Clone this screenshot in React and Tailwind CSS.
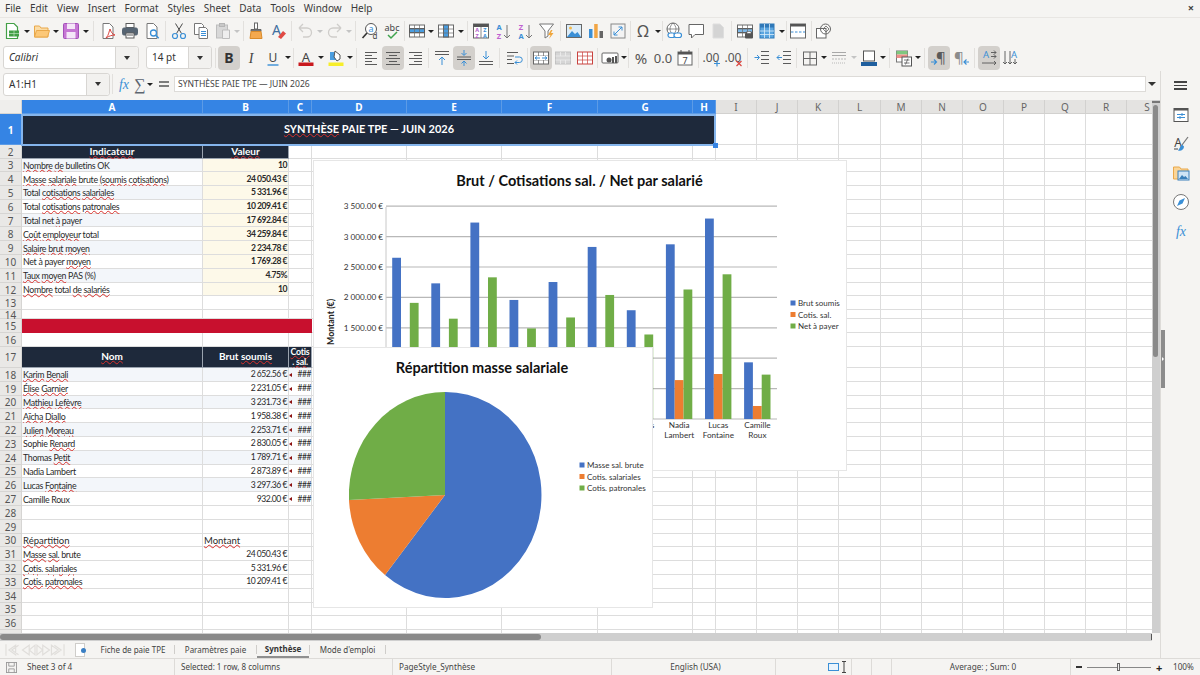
import { Fragment } from 'react';

const GRAY = '#5a5a5a';
const BLUE = '#3a8fd6';
const VALUE_SIZE = 'text-[8.6px] tracking-[-0.5px]';

const cols = [
  ['A', 'w-[181px]'], ['B', 'w-[86px]'], ['C', 'w-[23px]'], ['D', 'w-[95px]'], ['E', 'w-[95px]'],
  ['F', 'w-[96px]'], ['G', 'w-[95px]'], ['H', 'w-[23px]'], ['I', 'w-[41px]'], ['J', 'w-[41px]'],
  ['K', 'w-[41px]'], ['L', 'w-[42px]'], ['M', 'w-[41px]'], ['N', 'w-[41px]'], ['O', 'w-[41px]'],
  ['P', 'w-[41px]'], ['Q', 'w-[41px]'], ['R', 'w-[41px]'], ['S', 'w-[41px]'],
];

const indicateurs = [
  ['[Nombre] [de] bulletins OK', '10'],
  ['[Masse] [salariale] brute [(soumis] [cotisations)]', '24\u00a0050.43\u00a0€'],
  ['Total [cotisations] [salariales]', '5\u00a0331.96\u00a0€'],
  ['Total [cotisations] [patronales]', '10\u00a0209.41\u00a0€'],
  ['Total net [à] payer', '17\u00a0692.84\u00a0€'],
  ['[Coût] [employeur] total', '34\u00a0259.84\u00a0€'],
  ['[Salaire] [brut] [moyen]', '2\u00a0234.78\u00a0€'],
  ['Net à payer [moyen]', '1\u00a0769.28\u00a0€'],
  ['[Taux] [moyen] PAS (%)', '4.75%'],
  ['[Nombre] total [de] [salariés]', '10'],
];

const salaries = [
  ['[Karim] [Benali]', '2\u00a0652.56\u00a0€'],
  ['[Élise] [Garnier]', '2\u00a0231.05\u00a0€'],
  ['[Mathieu] [Lefèvre]', '3\u00a0231.73\u00a0€'],
  ['[Aïcha] [Diallo]', '1\u00a0958.38\u00a0€'],
  ['[Julien] [Moreau]', '2\u00a0253.71\u00a0€'],
  ['Sophie [Renard]', '2\u00a0830.05\u00a0€'],
  ['Thomas [Petit]', '1\u00a0789.71\u00a0€'],
  ['Nadia Lambert', '2\u00a0873.89\u00a0€'],
  ['Lucas [Fontaine]', '3\u00a0297.36\u00a0€'],
  ['Camille Roux', '932.00\u00a0€'],
];

const repartition = [
  ['[Masse] [sal.] brute', '24\u00a0050.43\u00a0€'],
  ['[Cotis.] [salariales]', '5\u00a0331.96\u00a0€'],
  ['[Cotis.] [patronales]', '10\u00a0209.41\u00a0€'],
];

const bars = [
  ['Karim', 'Benali', 2652, 540, 1910],
  ['Élise', 'Garnier', 2231, 450, 1650],
  ['Mathieu', 'Lefèvre', 3231, 660, 2330],
  ['Aïcha', 'Diallo', 1958, 390, 1490],
  ['Julien', 'Moreau', 2253, 460, 1670],
  ['Sophie', 'Renard', 2830, 580, 2040],
  ['Thomas', 'Petit', 1789, 360, 1390],
  ['Nadia', 'Lambert', 2873, 640, 2130],
  ['Lucas', 'Fontaine', 3297, 740, 2380],
  ['Camille', 'Roux', 932, 214, 730],
];

const axis = ['0.00 €', '500.00 €', '1 000.00 €', '1 500.00 €', '2 000.00 €', '2 500.00 €', '3 000.00 €', '3 500.00 €'];

// text with [words] flagged by the spell checker
const Spell = ({ text }) =>
  text.split(/(\[[^\]]+\])/).filter(Boolean).map((part, i) =>
    part.startsWith('[') ? (
      <span key={i} className="underline decoration-wavy decoration-[#d9302c] decoration-1 underline-offset-0">
        {part.slice(1, -1)}
      </span>
    ) : (
      <Fragment key={i}>{part}</Fragment>
    )
  );

const Ico = ({ children, vb = '0 0 18 18' }) => (
  <svg viewBox={vb} className="w-[18px] h-[18px] overflow-visible" fill="none" stroke={GRAY} strokeWidth="1">{children}</svg>
);

const Btn = ({ active, children }) => (
  <div className={`w-[22px] h-[24px] shrink-0 flex items-center justify-center rounded-[4px] ${active ? 'bg-[#d3d0cc]' : ''}`}>
    {children}
  </div>
);

const Drop = ({ off }) => (
  <div className="w-[7.5px] shrink-0 flex justify-center">
    <div className={`w-0 h-0 border-x-[3px] border-x-transparent border-t-[3px] ${off ? 'border-t-[#c4c4c4]' : 'border-t-[#222]'}`} />
  </div>
);

const Sep = ({ w }) => (
  <div className={`${w} shrink-0 flex justify-center`}>
    <div className="w-px h-[20px] bg-[#e2e0dd]" />
  </div>
);

const T = ({ x = 9, y = 14, size = 14, fill = '#444', weight, italic, family, children }) => (
  <text x={x} y={y} fontSize={size} fill={fill} stroke="none" textAnchor="middle" fontWeight={weight}
    fontStyle={italic ? 'italic' : undefined} fontFamily={family}>
    {children}
  </text>
);

const Page = ({ stroke = '#777' }) => <path d="M4 1.5h6.5l3.5 3.5v11.5H4z" fill="#fff" stroke={stroke} />;
const Lines = ({ x1 = 3, x2 = 15, ys, stroke = GRAY }) => ys.map(y => <path key={y} d={`M${x1} ${y}H${x2}`} stroke={stroke} />);

const Table = ({ row, col, stroke = '#6a6a6a', fill = '#4a9de0' }) => (
  <>
    <rect x="1.5" y="3" width="15" height="12" fill="#fff" stroke={stroke} />
    {row && <rect x="1.5" y="6.5" width="15" height="4" fill={fill} />}
    {col && <rect x="6.5" y="3" width="5" height="12" fill={fill} />}
    <path d="M1.5 7h15M1.5 11h15M6.5 3v12M11.5 3v12" stroke={stroke} strokeWidth=".7" />
  </>
);

const icons = {
  newdoc: <Ico><path d="M3.5 1.5h7.5l3.5 3.5v11.5h-11z" fill="#fff" stroke="#43a047" strokeWidth="1.2" /><rect x="6" y="8.5" width="10" height="6" fill="#43a047" stroke="none" /><path d="M6 11.5h10M11 8.5v6" stroke="#cdeccf" strokeWidth=".6" /></Ico>,
  open: <Ico><path d="M1.5 15V4h5l1.5 2h7v9z" fill="#fbdca6" stroke="#e9a84a" /><path d="M1.5 15l2-6.5h13l-2 6.5z" fill="#fcc878" stroke="#e9a84a" /></Ico>,
  save: <Ico><rect x="1.5" y="1.5" width="15" height="15" rx="1" fill="#c676d4" stroke="#a34fb8" /><rect x="5" y="1.5" width="8" height="5.5" fill="#f5e6f8" stroke="none" /><rect x="4.5" y="10" width="9" height="6.5" fill="#f5e6f8" stroke="none" /></Ico>,
  pdf: <Ico><Page /><path d="M7 16c3-3 3-7 4-9 1 3 2 5 5 6-3 0-6 1-9 3z" fill="none" stroke="#d9453f" /></Ico>,
  print: <Ico><rect x="5" y="1.5" width="8" height="4" fill="#fff" /><rect x="1.5" y="6" width="15" height="7" rx="1.5" fill="#566472" stroke="#566472" /><rect x="5" y="11" width="8" height="5" fill="#fff" /><path d="M6 13h6" /></Ico>,
  preview: <Ico><Page /><circle cx="10.5" cy="11" r="3" fill="#fff" stroke={BLUE} strokeWidth="1.3" /><path d="M12.7 13.2l3 3" stroke={BLUE} strokeWidth="1.5" /></Ico>,
  cut: <Ico><path d="M6.5 11.5L12.5 1.5M11.5 11.5L5.5 1.5" stroke="#4b4b4b" /><circle cx="5" cy="14" r="2.5" stroke={BLUE} strokeWidth="1.2" /><circle cx="13" cy="14" r="2.5" stroke={BLUE} strokeWidth="1.2" /></Ico>,
  copy: <Ico><path d="M2.5 1.5h7l2 2v9h-9z" fill="#fff" stroke="#777" /><path d="M7 5.5h6.5l2 2v9H7z" fill="#fff" stroke="#777" /><path d="M9 9.5h5M9 11.5h5M9 13.5h5" stroke={BLUE} /></Ico>,
  paste: <Ico><rect x="2.5" y="3" width="11" height="13" fill="#d8d8d8" stroke="#bdbdbd" /><rect x="5.5" y="1.5" width="5" height="3" fill="#c8c8c8" stroke="#b5b5b5" /><path d="M8.5 8h7v8.5h-7z" fill="#eee" stroke="#bdbdbd" /></Ico>,
  clone: <Ico><rect x="7.5" y="1" width="3" height="6" fill="#fff" stroke="#666" /><path d="M4 7.5h10v2H4z" fill="#777" stroke="#666" /><path d="M4 9.5h10l1 7H3z" fill="#f4a94f" stroke="#d98b2b" /></Ico>,
  clear: <Ico><T x={7.5} y={13} size={14} fill="#3f6f9f">A</T><path d="M9 15l5-6 3 2.5-5 5.5z" fill="#e04a44" stroke="none" /></Ico>,
  undo: <Ico><path d="M3 6h8a4.5 4.5 0 010 9H7M3 6l4-4M3 6l4 4" stroke="#cfcdca" strokeWidth="1.3" /></Ico>,
  redo: <Ico><path d="M15 6H7a4.5 4.5 0 000 9h4M15 6l-4-4M15 6l-4 4" stroke="#cfcdca" strokeWidth="1.3" /></Ico>,
  find: <Ico><circle cx="10" cy="7" r="5.5" fill="#fff" stroke="#555" /><path d="M6 11l-4.5 5" stroke="#333" strokeWidth="1.6" /><T x={10} y={10} size={9} fill={BLUE}>a</T><T x={14} y={17} size={8} fill="#444">d</T></Ico>,
  spell: <Ico><T x={9} y={9} size={9} fill="#444" family="Noto Sans">abc</T><path d="M5 13l3 3 6-6" stroke="#3fa34d" strokeWidth="1.5" /></Ico>,
  rows: <Ico><Table row /></Ico>,
  cols: <Ico><Table col /></Ico>,
  sortaz: <Ico><rect x="1.5" y="2" width="15" height="14" fill="#fff" stroke="#666" /><rect x="1.5" y="2" width="15" height="3" fill="#555" stroke="none" /><path d="M9 5v11" stroke="#888" /><T x={5.2} y={10} size={5.5} fill="#b25ec9" weight="700">A</T><T x={5.2} y={15.5} size={5.5} fill="#b25ec9" weight="700">Z</T><T x={12.8} y={10} size={5.5} fill="#3a8fd6" weight="700">Z</T><T x={12.8} y={15.5} size={5.5} fill="#3a8fd6" weight="700">A</T></Ico>,
  asc: <Ico><T x={5} y={7.5} size={7.5} fill="#3a8fd6" weight="700">A</T><T x={5} y={16.5} size={7.5} fill="#c05fd0" weight="700">Z</T><path d="M13 3v13M10 13l3 3 3-3" stroke="#777" /></Ico>,
  desc: <Ico><T x={5} y={7.5} size={7.5} fill="#c05fd0" weight="700">Z</T><T x={5} y={16.5} size={7.5} fill="#3a8fd6" weight="700">A</T><path d="M13 3v13M10 13l3 3 3-3" stroke="#777" /></Ico>,
  filter: <Ico><path d="M1.5 2h14l-5.5 7v5l-3 2V9z" fill="#fff" stroke="#777" /><path d="M13 8l-3 5h2.5l-1.5 4 4.5-6H13l1.5-3z" fill="#f0a63c" stroke="none" /></Ico>,
  image: <Ico><rect x="1.5" y="2.5" width="15" height="13" fill="#dcecf8" stroke="#666" /><circle cx="5.5" cy="6" r="1.5" fill="#f2b84b" stroke="none" /><path d="M2 15l5-6 3 3 2.5-2 3.5 5z" fill={BLUE} stroke="none" /></Ico>,
  chart: <Ico><rect x="2" y="7" width="3.5" height="9" fill={BLUE} stroke="none" /><rect x="7.2" y="2" width="3.5" height="14" fill="#f2a544" stroke="none" /><rect x="12.5" y="9" width="3.5" height="7" fill="#666" stroke="none" /></Ico>,
  pivot: <Ico><rect x="2" y="2" width="14" height="14" fill="#f3f3f3" stroke="#888" /><path d="M5 13l8-8M9.5 5H13v3.5M5 9.5V13h3.5" stroke={BLUE} /></Ico>,
  omega: <Ico><T x={9} y={15} size={16} fill="#555" family="Noto Sans">Ω</T></Ico>,
  link: <Ico><circle cx="8" cy="7" r="6" fill="#fff" stroke="#666" /><path d="M2 7h12M8 1c-4 4-4 8 0 12M8 1c4 4 4 8 0 12" stroke="#666" strokeWidth=".7" /><rect x="3" y="11" width="7" height="4.5" rx="2.2" fill="#fff" stroke={BLUE} strokeWidth="1.2" /><rect x="9" y="11" width="7.5" height="4.5" rx="2.2" fill="#fff" stroke={BLUE} strokeWidth="1.2" /></Ico>,
  comment: <Ico><path d="M2 2.5h14.5v10H8l-3.5 3.5V12.5H2z" fill="#fff" stroke="#666" /></Ico>,
  note: <Ico><path d="M4 2h7l3.5 3.5V16H4z" fill="#d4d4d4" stroke="#dedede" /></Ico>,
  printarea: <Ico><Table row fill="#7db8e8" /><rect x="9" y="11" width="8" height="5.5" rx="1" fill="#555" stroke="none" /><rect x="11" y="9.5" width="4" height="2" fill="#fff" stroke="#555" strokeWidth=".6" /></Ico>,
  freeze: <Ico><rect x="2" y="2" width="14" height="14" fill="#5aa5e0" stroke="#2f78b8" /><rect x="2" y="2" width="14" height="3.5" fill="#2f78b8" stroke="none" /><path d="M6.5 2v14M11.5 2v14M2 9h14M2 12.5h14" stroke="#dcedfa" strokeWidth=".8" /></Ico>,
  split: <Ico><rect x="1.5" y="2" width="15" height="14" fill="#fff" stroke="#666" /><rect x="1.5" y="2" width="15" height="2.5" fill="#555" stroke="none" /><path d="M2 10h14" stroke={BLUE} strokeDasharray="2.5 1.5" /></Ico>,
  shapes: <Ico><rect x="1.5" y="6.5" width="9.5" height="9.5" fill="#fff" stroke="#666" /><circle cx="10.5" cy="7" r="5" stroke="#666" /><path d="M8 7l3-3 3 3-3 3z" stroke="#666" strokeWidth=".8" /></Ico>,
  bold: <Ico><T y={14} size={14} weight="700" fill="#333" family="Noto Sans">B</T></Ico>,
  italic: <Ico><T y={14} size={14} italic fill="#444" family="Liberation Serif">I</T></Ico>,
  under: <Ico><T y={12.5} size={12} fill="#444" family="Noto Sans">U</T><path d="M3.5 16h11" stroke={BLUE} strokeWidth="1.4" /></Ico>,
  color: <Ico><T y={12.5} size={13} fill="#444" family="Noto Sans">A</T><rect x="1.5" y="13.5" width="15" height="3.5" fill="#c9191e" stroke="none" /></Ico>,
  mark: <Ico><path d="M3 3h6v8H3z" fill="#4a9de0" stroke="none" /><path d="M8 2l5 4v4l-3 2-3-4z" fill="#fff" stroke="#555" /><rect x="1.5" y="13.5" width="15" height="3.5" fill="#f7ee2a" stroke="none" /></Ico>,
  left: <Ico><Lines x2={15} ys={[3.5, 9.5, 15.5]} /><Lines x2={10} ys={[6.5, 12.5]} /></Ico>,
  center: <Ico><Lines x1={2} x2={16} ys={[3.5, 9.5, 15.5]} /><Lines x1={5} x2={13} ys={[6.5, 12.5]} /></Ico>,
  right: <Ico><Lines x1={3} x2={16} ys={[3.5, 9.5, 15.5]} /><Lines x1={8} x2={16} ys={[6.5, 12.5]} /></Ico>,
  top: <Ico><Lines x1={2} x2={16} ys={[2.5, 5.5]} /><path d="M9 16V8M6 11l3-3 3 3" stroke={BLUE} /></Ico>,
  middle: <Ico><Lines x1={2} x2={16} ys={[8, 10.5]} /><path d="M9 1v5M6.5 4L9 6.5 11.5 4M9 17v-5M6.5 14.5L9 12l2.5 2.5" stroke={BLUE} /></Ico>,
  bottom: <Ico><Lines x1={2} x2={16} ys={[12.5, 15.5]} /><path d="M9 2v8M6 7l3 3 3-3" stroke={BLUE} /></Ico>,
  wrap: <Ico><Lines x1={2} x2={13} ys={[3.5]} /><Lines x1={2} x2={9} ys={[7, 14.5]} /><Lines x1={2} x2={7} ys={[10.5]} /><path d="M10 8h4.5a2.5 2.5 0 010 5.5H10M12 11.5l-2 2 2 2" stroke={BLUE} /></Ico>,
  merge: <Ico><Table stroke="#666" /><path d="M2 7h14v4H2z" fill="#fff" stroke="none" /><path d="M3 9h5M15 9h-5M5 7.5L3 9l2 1.5M13 7.5L15 9l-2 1.5" stroke={BLUE} /></Ico>,
  mergeoff: <Ico><rect x="1.5" y="3" width="15" height="12" fill="#d6d6d6" stroke="#c2c2c2" /><path d="M1.5 7h15M1.5 11h15M6.5 3v4M11.5 3v4M6.5 11v4M11.5 11v4" stroke="#f0f0f0" strokeWidth=".7" /></Ico>,
  unmerge: <Ico><Table stroke="#c9423e" /></Ico>,
  currency: <Ico><rect x="1" y="4" width="16" height="10" rx="1" fill="#fff" stroke="#666" /><circle cx="8" cy="11" r="2.5" fill="#555" stroke="none" /><rect x="11" y="8" width="2" height="6" fill="#555" stroke="none" /><rect x="14" y="7" width="2" height="7" fill="#555" stroke="none" /></Ico>,
  percent: <Ico><T y={14.5} size={15} fill="#555" family="Noto Sans">%</T></Ico>,
  number: <Ico><T y={14} size={13} fill="#555" family="Noto Sans">0.0</T></Ico>,
  date: <Ico><rect x="2" y="3" width="14" height="13" fill="#fff" stroke="#666" /><rect x="2" y="3" width="14" height="2.5" fill="#555" stroke="none" /><path d="M5 1v3M13 1v3" stroke="#555" /><T y={14.5} size={9} fill="#444" family="Noto Sans">7</T></Ico>,
  adddec: <Ico><T x={8} y={12.5} size={12} fill="#555" family="Noto Sans">.00</T><path d="M14 11.5v6M11 14.5h6" stroke={BLUE} strokeWidth="1.2" /></Ico>,
  deldec: <Ico><T x={8} y={12.5} size={12} fill="#555" family="Noto Sans">.00</T><path d="M11.5 12l5 5M16.5 12l-5 5" stroke="#d9453f" strokeWidth="1.2" /></Ico>,
  indent: <Ico><Lines x1={8} x2={16} ys={[2.5, 6.5, 10.5, 14.5]} /><path d="M1.5 8.5H6M4 6l2.5 2.5L4 11" stroke={BLUE} /></Ico>,
  outdent: <Ico><Lines x1={8} x2={16} ys={[2.5, 6.5, 10.5, 14.5]} /><path d="M7 8.5H2M4.5 6L2 8.5 4.5 11" stroke={BLUE} /></Ico>,
  borders: <Ico><rect x="2.5" y="3" width="13" height="13" stroke="#666" /><path d="M9 3v13M2.5 9.5h13" stroke="#666" /></Ico>,
  bstyle: <Ico><path d="M2 3.5h14M2 6.5h14" stroke="#a8a8a8" strokeWidth="1.2" /><path d="M2 10h14" stroke="#b8b8b8" strokeDasharray="2 1" /><path d="M2 14h14" stroke="#b8b8b8" strokeDasharray="1 1" /></Ico>,
  bcolor: <Ico><rect x="3.5" y="2" width="11" height="10" fill="#fff" stroke="#555" /><rect x="1" y="13" width="16" height="4" fill="#1f5f9e" stroke="none" /></Ico>,
  cond: <Ico><rect x="1.5" y="2" width="11" height="11" fill="#fff" stroke="#777" /><rect x="1.5" y="2" width="11" height="3.5" fill="#7fc77f" stroke="none" /><rect x="1.5" y="5.5" width="11" height="3.5" fill="#ee8f8a" stroke="none" /><rect x="7" y="8" width="9.5" height="9" fill="#fff" stroke="#555" /><path d="M9 11h5.5M9 14h5.5M13 9.5l-2.5 6" stroke="#555" strokeWidth=".8" /></Ico>,
  ltr: <Ico><T x={11} y={14} size={15} fill="#5a5a5a" family="Noto Sans">¶</T><path d="M1 13h5M4 10.5L6.5 13 4 15.5" stroke={BLUE} strokeWidth="1.2" /></Ico>,
  rtl: <Ico><T x={7} y={14} size={15} fill="#8c8c8c" family="Noto Sans">¶</T><path d="M17 13h-5M14.5 10.5L12 13l2.5 2.5" stroke={BLUE} strokeWidth="1.2" /></Ico>,
  horiz: <Ico><T x={6} y={9} size={9.5} fill={BLUE} family="Noto Sans">A</T><path d="M11 3.5h5M14 1.5l2 2-2 2M11 7.5h5M14 5.5l2 2-2 2M2 14h14M14 12l2 2-2 2" stroke="#555" strokeWidth=".9" /></Ico>,
  vert: <Ico><T x={12} y={9} size={9.5} fill={BLUE} family="Noto Sans">A</T><path d="M3 2v13M1 13l2 2 2-2M8 2v13M6 13l2 2 2-2M13 10v5M11 13l2 2 2-2" stroke="#555" strokeWidth=".9" /></Ico>,
  props: <Ico><rect x="2" y="2.5" width="14" height="13" fill="#fff" stroke="#555" /><rect x="2" y="2.5" width="14" height="2" fill="#555" stroke="none" /><path d="M5 8.5h8M5 11.5h8" stroke={BLUE} /><path d="M10 7v3M8 10v3" stroke={BLUE} /></Ico>,
  styles: <Ico><T x={6} y={12} size={12} fill="#444" family="Noto Sans">A</T><path d="M6 14H2" stroke="#444" /><path d="M16 2l-6 8" stroke="#777" strokeWidth="1.2" /><path d="M10 9.5c-2 1-2 4-4 6 3 1 6-1 6-4z" fill={BLUE} stroke="none" /></Ico>,
  gallery: <Ico><path d="M1.5 15V3h6L9 5h7v10z" fill="#fbd597" stroke="#e9a84a" /><rect x="6" y="7" width="11" height="9" fill="#cfe4f6" stroke="#3a7fba" /><path d="M7 15l3-4 2 2 1.5-1 2.5 3z" fill="#3a7fba" stroke="none" /></Ico>,
  nav: <Ico><circle cx="9" cy="9" r="7.5" fill="#fff" stroke="#777" /><path d="M13 5l-2.5 5.5L5 13l2.5-5.5z" fill={BLUE} stroke="none" /></Ico>,
  fx: <Ico><T y={14} size={14} italic fill="#3a8fd6" family="Liberation Serif">fx</T></Ico>,
  sum: <Ico><T y={15} size={16} fill="#5c6570" family="Noto Sans">∑</T></Ico>,
  eq: <Ico><path d="M4 7h10M4 11h10" stroke="#555" strokeWidth="1.5" /></Ico>,
};

const Icon = ({ name, active }) => <Btn active={active}>{icons[name]}</Btn>;

const Combo = ({ width, split, italic, text }) => (
  <div className={`${width} h-[23px] shrink-0 flex bg-white border border-[#d8d6d3] rounded-[3px] text-[10px] text-[#333]`}>
    <div className={`flex-1 min-w-0 flex items-center pl-[5px] ${italic ? 'italic' : ''}`}>{text}</div>
    <div className={`${split} flex items-center justify-center bg-[#f2f1ef] border-l border-[#d8d6d3] rounded-r-[3px]`}>
      <div className="w-0 h-0 border-x-[3.5px] border-x-transparent border-t-[4px] border-t-[#333]" />
    </div>
  </div>
);

const menu = ['File', 'Edit', 'View', 'Insert', 'Format', 'Styles', 'Sheet', 'Data', 'Tools', 'Window', 'Help'];

const MenuBar = () => (
  <div className="h-[17px] flex items-center pl-[5px] gap-[9px] text-[10px] text-[#3a3a3a] relative">
    {menu.map(m => <span key={m}>{m}</span>)}
    <span className="absolute right-[6px] top-0 text-[11px] font-bold text-[#444]">×</span>
  </div>
);

const StandardBar = () => (
  <div className="h-[27px] pl-[1px] flex items-center border-t border-[#e8e6e3]">
    <Icon name="newdoc" /><Drop /><Icon name="open" /><Drop /><Icon name="save" /><Drop /><Sep w="w-[7px]" />
    <Icon name="pdf" /><Icon name="print" /><Icon name="preview" /><Sep w="w-[5px]" />
    <Icon name="cut" /><Icon name="copy" /><Icon name="paste" /><Drop off /><Sep w="w-[4px]" />
    <Icon name="clone" /><Icon name="clear" /><Sep w="w-[5px]" />
    <Icon name="undo" /><Drop off /><Icon name="redo" /><Drop off /><Sep w="w-[5.5px]" />
    <Icon name="find" /><Icon name="spell" /><Sep w="w-[3px]" />
    <Icon name="rows" /><Drop /><Icon name="cols" /><Drop /><Sep w="w-[5.5px]" />
    <Icon name="sortaz" /><Icon name="asc" /><Icon name="desc" /><Icon name="filter" /><Sep w="w-[5px]" />
    <Icon name="image" /><Icon name="chart" /><Icon name="pivot" /><Sep w="w-[3px]" />
    <Icon name="omega" /><Drop /><Sep w="w-[1.5px]" />
    <Icon name="link" /><Icon name="comment" /><Icon name="note" /><Sep w="w-[5px]" />
    <Icon name="printarea" /><Icon name="freeze" /><Drop /><Sep w="w-[1.5px]" />
    <Icon name="split" /><Sep w="w-[4px]" /><Icon name="shapes" />
  </div>
);

const FormatBar = () => (
  <div className="h-[27px] pl-[3px] flex items-center">
    <Combo width="w-[136px]" split="w-[23px]" italic text="Calibri" />
    <div className="w-[7px] shrink-0" />
    <Combo width="w-[66px]" split="w-[23px]" text="14 pt" />
    <Sep w="w-[6px]" />
    <Icon name="bold" active /><Icon name="italic" /><Icon name="under" /><Drop /><Sep w="w-[3.5px]" />
    <Icon name="color" /><Drop /><Icon name="mark" /><Drop /><Sep w="w-[5.5px]" />
    <Icon name="left" /><Icon name="center" active /><Icon name="right" /><Sep w="w-[5px]" />
    <Icon name="top" /><Icon name="middle" active /><Icon name="bottom" /><Sep w="w-[6px]" />
    <Icon name="wrap" /><Sep w="w-[5px]" />
    <Icon name="merge" active /><Icon name="mergeoff" /><Icon name="unmerge" /><Sep w="w-[3px]" />
    <Icon name="currency" /><Drop /><Sep w="w-[1.5px]" />
    <Icon name="percent" /><Icon name="number" /><Icon name="date" /><Sep w="w-[5px]" />
    <Icon name="adddec" /><Icon name="deldec" /><Sep w="w-[6px]" />
    <Icon name="indent" /><Icon name="outdent" /><Sep w="w-[4px]" />
    <Icon name="borders" /><Drop /><Icon name="bstyle" /><Drop off /><Icon name="bcolor" /><Drop /><Sep w="w-[5.5px]" />
    <Icon name="cond" /><Drop /><Sep w="w-[5.5px]" />
    <Icon name="ltr" active /><Icon name="rtl" /><Sep w="w-[6px]" />
    <Icon name="horiz" active /><Icon name="vert" />
  </div>
);

const FormulaBar = () => (
  <div className="h-[29px] shrink-0 pl-[3px] flex items-center pb-[3px] text-[8.6px] text-[#444]">
    <Combo width="w-[107px]" split="w-[23px]" text="A1:H1" />
    <Sep w="w-[5px]" />
    <div className="w-[18px] shrink-0 flex justify-center">{icons.fx}</div>
    <div className="w-[13px] shrink-0 flex justify-center">{icons.sum}</div>
    <Drop />
    <div className="w-[20.5px] shrink-0 flex justify-center">{icons.eq}</div>
    <div className="w-[972px] h-[16px] shrink-0 bg-white border border-[#dddbd8] flex items-center pl-[3px]">
      SYNTHÈSE PAIE TPE — JUIN 2026
    </div>
    <div className="ml-[2px] w-0 h-0 border-x-[4px] border-x-transparent border-t-[4px] border-t-[#333]" />
  </div>
);

const HeaderRow = () => (
  <div className="h-[14px] flex text-[10px] leading-none font-['Noto_Sans',sans-serif]">
    <div className="w-[22px] shrink-0 bg-[#efeeec] border-r border-b border-[#d6d5d3]" />
    {cols.map(([l, w], i) => (
      <div key={l} className={`${w} shrink-0 flex items-center justify-center border-r border-b ${i < 8 ? 'bg-[#3584e4] border-[#5c9be6] text-white font-bold' : 'bg-[#e4e3e1] border-[#d2d1cf] text-[#666]'}`}>
        {l}
      </div>
    ))}
  </div>
);

const Blank = ({ w }) => <div className={`${w} shrink-0 border-r border-b border-[#dddddd]`} />;

const Row = ({ n, h, from, active, children }) => (
  <div className={`${h} flex`}>
    <div className={`w-[22px] shrink-0 flex items-center justify-center pt-px leading-none border-r border-b font-['Noto_Sans',sans-serif] ${active ? 'bg-[#3584e4] border-[#5c9be6] text-white font-bold text-[10px]' : 'bg-[#e9e8e6] border-[#d6d5d3] text-[#555] text-[10px]'}`}>
      {n}
    </div>
    {children}
    {cols.slice(from).map(([l, w]) => <Blank key={l} w={w} />)}
  </div>
);

const HeadCell = ({ w, small, children }) => (
  <div className={`${w} shrink-0 flex items-center justify-center text-center bg-[#1e293b] border-r border-b border-[#9aa3af] text-white font-bold ${small ? 'text-[8.8px] leading-[10px] tracking-[-0.2px]' : 'text-[10px] leading-[11px]'}`}>
    {children}
  </div>
);

const TextCell = ({ w, bg = '', size = 'text-[8.8px] tracking-[-0.3px]', className = '', children }) => (
  <div className={`${w} shrink-0 flex items-center whitespace-nowrap px-[1px] pt-px leading-[11px] border-r border-b border-[#dddddd] text-[#2a2a2a] ${size} ${bg} ${className}`}>
    {children}
  </div>
);

const AmountRow = ({ n, label, value }) => (
  <Row n={n} h="h-[13.8px]" from={2}>
    <TextCell w="w-[181px]"><span><Spell text={label} /></span></TextCell>
    <TextCell w="w-[86px]" size={VALUE_SIZE} className="justify-end">{value}</TextCell>
  </Row>
);

const BarChart = () => (
  <div className="absolute left-[313px] top-[60px] w-[534px] h-[311px] bg-white border border-[#e6e6e6]">
    <svg viewBox="314 161 532 309" className="w-full h-full font-['Lato',sans-serif]">
      <text x="579.5" y="186" fontSize="14.5" fontWeight="700" textAnchor="middle" fill="#111">Brut / Cotisations sal. / Net par salarié</text>
      {axis.map((label, i) => {
        const y = 419 - i * 30.4;
        return (
          <g key={label}>
            <path d={`M386 ${y}H777`} stroke="#b8b8b8" strokeWidth="1.2" />
            <text x="383" y={y + 3} fontSize="8.2" textAnchor="end" fill="#333">{label}</text>
          </g>
        );
      })}
      <path d="M386 207V419" stroke="#c8c8c8" />
      {bars.map(([first, last, brut, cotis, net], i) => {
        const x = 392.2 + i * 39.1;
        const cx = 386 + (i + 0.5) * 39.1;
        return (
          <g key={first}>
            <rect x={x} y={419 - brut * 0.0608} width="8.8" height={brut * 0.0608} fill="#4472c4" />
            <rect x={x + 8.8} y={419 - cotis * 0.0608} width="8.8" height={cotis * 0.0608} fill="#ed7d31" />
            <rect x={x + 17.6} y={419 - net * 0.0608} width="8.8" height={net * 0.0608} fill="#70ad47" />
            <text x={cx} y="428" fontSize="8.2" textAnchor="middle" fill="#333">{first}</text>
            <text x={cx} y="437.5" fontSize="8.2" textAnchor="middle" fill="#333">{last}</text>
          </g>
        );
      })}
      <text transform="translate(334 322) rotate(-90)" fontSize="8.8" fontWeight="700" textAnchor="middle" fill="#222">Montant (€)</text>
      {[['Brut soumis', '#4472c4', 303], ['Cotis. sal.', '#ed7d31', 314.5], ['Net à payer', '#70ad47', 326]].map(([l, c, y]) => (
        <g key={l}>
          <rect x="790.5" y={y - 2.5} width="5" height="5" fill={c} />
          <text x="798" y={y + 3} fontSize="8" fill="#333">{l}</text>
        </g>
      ))}
    </svg>
  </div>
);

const PieChart = () => (
  <div className="absolute left-[313px] top-[247px] w-[340px] h-[261px] bg-white border border-[#e6e6e6]">
    <svg viewBox="314 348 338 259" className="w-full h-full font-['Lato',sans-serif]">
      <text x="482" y="373" fontSize="14.5" fontWeight="700" textAnchor="middle" fill="#111">Répartition masse salariale</text>
      <path d="M445 495V392A96 103 0 1 1 385 575Z" fill="#4472c4" />
      <path d="M445 495L385 575A96 103 0 0 1 349 500Z" fill="#ed7d31" />
      <path d="M445 495L349 500A96 103 0 0 1 445 392Z" fill="#70ad47" />
      {[['Masse sal. brute', '#4472c4', 465], ['Cotis. salariales', '#ed7d31', 476.5], ['Cotis. patronales', '#70ad47', 488]].map(([l, c, y]) => (
        <g key={l}>
          <rect x="579.5" y={y - 2.5} width="5" height="5" fill={c} />
          <text x="587" y={y + 3} fontSize="8" fill="#333">{l}</text>
        </g>
      ))}
    </svg>
  </div>
);

const Sheet = () => (
  <div className="h-[533px] flex shrink-0">
    <div className="relative w-[1152px] shrink-0 overflow-hidden bg-white font-['Lato',sans-serif]">
      <HeaderRow />
      <Row n="1" h="h-[31px]" from={8} active>
        <div className="w-[694px] shrink-0 flex items-center justify-center bg-[#1e293b] text-white font-bold text-[11px]">
          <span><Spell text="[SYNTHÈSE] PAIE TPE — JUIN 2026" /></span>
        </div>
      </Row>
      <Row n="2" h="h-[13.5px]" from={2}>
        <HeadCell w="w-[181px]"><span><Spell text="[Indicateur]" /></span></HeadCell>
        <HeadCell w="w-[86px]"><span><Spell text="[Valeur]" /></span></HeadCell>
      </Row>
      {indicateurs.map(([label, value], i) => (
        <Row key={label} n={i + 3} h="h-[13.8px]" from={2}>
          <TextCell w="w-[181px]" bg={i % 2 === 0 ? 'bg-[#f3f6fa]' : 'bg-white'}><span><Spell text={label} /></span></TextCell>
          <TextCell w="w-[86px]" bg="bg-[#fdf9e9]" size={VALUE_SIZE} className="justify-end font-bold">{value}</TextCell>
        </Row>
      ))}
      <Row n="13" h="h-[13.8px]" from={0} />
      <Row n="14" h="h-[8.7px]" from={0} />
      <Row n="15" h="h-[14px]" from={3}>
        <div className="w-[290px] shrink-0 bg-[#c8102e]" />
      </Row>
      <Row n="16" h="h-[14px]" from={0} />
      <Row n="17" h="h-[21px]" from={3}>
        <HeadCell w="w-[181px]"><span><Spell text="[Nom]" /></span></HeadCell>
        <HeadCell w="w-[86px]"><span><Spell text="Brut [soumis]" /></span></HeadCell>
        <HeadCell w="w-[23px]" small><span><Spell text="[Cotis] [. sal.]" /></span></HeadCell>
      </Row>
      {salaries.map(([name, value], i) => (
        <Row key={name} n={i + 18} h="h-[13.8px]" from={3}>
          <TextCell w="w-[181px]" bg={i % 2 === 0 ? 'bg-[#f3f6fa]' : 'bg-white'}><span><Spell text={name} /></span></TextCell>
          <TextCell w="w-[86px]" bg={i % 2 === 0 ? 'bg-[#f3f6fa]' : 'bg-white'} size={VALUE_SIZE} className="justify-end">{value}</TextCell>
          <TextCell w="w-[23px]" bg={i % 2 === 0 ? 'bg-[#f3f6fa]' : 'bg-white'} size={VALUE_SIZE} className="justify-between !px-0">
            <span className="w-0 h-0 border-y-[2.5px] border-y-transparent border-r-[3px] border-r-[#8c1010]" />
            <span>###</span>
          </TextCell>
        </Row>
      ))}
      <Row n="28" h="h-[13.8px]" from={0} />
      <Row n="29" h="h-[13.8px]" from={0} />
      <Row n="30" h="h-[13.8px]" from={2}>
        <TextCell w="w-[181px]" size="text-[9.5px]"><span><Spell text="[Répartition]" /></span></TextCell>
        <TextCell w="w-[86px]" size="text-[9.5px]"><span><Spell text="[Montant]" /></span></TextCell>
      </Row>
      {repartition.map(([label, value], i) => <AmountRow key={label} n={i + 31} label={label} value={value} />)}
      {[34, 35, 36].map(n => <Row key={n} n={n} h="h-[13.8px]" from={0} />)}
      <Row h="h-[13.8px]" from={0} />
      <BarChart />
      <PieChart />
      {/* selection around A1:H1 */}
      <div className="absolute left-[21px] top-[14px] w-[695px] h-[32px] border-2 border-[#85b5ec]" />
      <div className="absolute left-[713px] top-[43px] w-[5px] h-[5px] bg-[#3584e4]" />
    </div>
    <div className="w-[8px] shrink-0 bg-[#cfcfcf] relative">
      <div className="absolute left-0 top-[1px] w-full h-[2px] bg-[#777]" />
      <div className="absolute left-[1px] top-[5px] w-[5px] h-[252px] bg-[#8a8a8a] rounded-[3px]" />
    </div>
  </div>
);

const HScroll = () => (
  <div className="h-[8px] shrink-0 w-[1152px] bg-[#cfcfcf] flex items-center relative">
    <div className="w-[541px] h-[6px] bg-[#8a8a8a] rounded-[3px]" />
    <div className="absolute right-0 top-[1px] w-px h-[6px] bg-[#555]" />
  </div>
);

const tabs = [
  ['Fiche de paie TPE', 'w-[82px]'],
  ['Paramètres paie', 'w-[81px]'],
  ['Synthèse', 'w-[52px]'],
  ["Mode d'emploi", 'w-[75px]'],
];

const TabBar = () => (
  <div className="h-[17px] shrink-0 flex items-center text-[8px] text-[#444]">
    <svg viewBox="0 0 62 14" className="w-[60px] h-[14px] ml-[5px]" fill="none" stroke="#e0dedb" strokeWidth="1.2">
      <path d="M1 1v12M11 2L4 7l7 5zM14 2L7 7l7 5" />
      <path d="M25 2l-7 5 7 5zM31 2l-6 5 6 5z" />
      <path d="M33 2l6 5-6 5zM39 2l7 5-7 5z" />
      <path d="M48 2l7 5-7 5zM51 2l7 5-7 5M61 1v12" />
    </svg>
    <div className="relative w-[10px] h-[14px] ml-[10px] bg-white border border-[#cfcdca]">
      <div className="absolute left-[5px] top-[4px] w-[5px] h-[5px] rounded-full bg-[#3a7fc4]" />
    </div>
    <div className="w-[7px] shrink-0" />
    {tabs.map(([label, w]) => (
      <Fragment key={label}>
        <div className={`${w} h-[16px] shrink-0 flex items-center justify-center ${label === 'Synthèse' ? 'font-bold border-b-2 border-b-[#8f8f8f] text-[#333]' : ''}`}>
          {label}
        </div>
        <div className="w-px h-[9px] shrink-0 bg-[#cfcdca]" />
      </Fragment>
    ))}
  </div>
);

const SideBar = () => (
  <div className="w-[40px] shrink-0 border-l border-[#dddbd8] relative flex flex-col items-center">
    <div className="h-[29px] flex flex-col items-center justify-center gap-[2px]">
      <div className="w-[13px] h-[1.5px] bg-[#444]" />
      <div className="w-[13px] h-[1.5px] bg-[#444]" />
      <div className="w-[13px] h-[1.5px] bg-[#444]" />
    </div>
    {['props', 'styles', 'gallery', 'nav', 'fx'].map(n => (
      <div key={n} className="h-[29px] flex items-center justify-center">{icons[n]}</div>
    ))}
    <div className="absolute left-0 top-[259px] w-[4px] h-[58px] bg-[#8c8c8c] flex items-center justify-center">
      <div className="w-0 h-0 border-y-[2px] border-y-transparent border-l-[2.5px] border-l-white" />
    </div>
  </div>
);

const Cell = ({ w, className = '', children }) => (
  <div className={`${w} shrink-0 h-full flex items-center border-r border-[#dddbd8] ${className}`}>{children}</div>
);

const StatusBar = () => (
  <div className="h-[17px] shrink-0 flex items-center border-t border-[#dddbd8] text-[8.2px] text-[#444]">
    <Cell w="w-[175px]" className="pl-[6px] gap-[10px]">
      <svg viewBox="0 0 12 12" className="w-[11px] h-[11px]" fill="none" stroke="#9a9a9a"><rect x=".5" y=".5" width="11" height="11" /><path d="M3 .5v4h6v-4M3 11.5v-4h6v4" /></svg>
      Sheet 3 of 4
    </Cell>
    <Cell w="w-[218px]" className="pl-[6px] text-[8px]">Selected: 1 row, 8 columns</Cell>
    <Cell w="w-[219px]" className="pl-[6px]">PageStyle_Synthèse</Cell>
    <Cell w="w-[164px]" className="justify-center pl-[4px]">English (USA)</Cell>
    <Cell w="w-[76px]" className="pl-[52px] gap-[2px]">
      <div className="w-[11px] h-[8px] border border-[#3a8fd6] bg-[#eaf4fc]" />
      <svg viewBox="0 0 6 12" className="w-[6px] h-[12px]" fill="none" stroke="#444"><path d="M1 .5h4M1 11.5h4M3 .5v11" /></svg>
    </Cell>
    <Cell w="w-[20px]"></Cell>
    <Cell w="w-[20px]"></Cell>
    <Cell w="w-[179px]" className="justify-center pl-[4px]">Average: ; Sum: 0</Cell>
    <div className="h-full w-[97px] flex items-center relative pl-[5px] text-[#222]">
      <span className="w-[6px] h-[1.5px] bg-[#333]" />
      <div className="ml-[5px] w-[64px] h-px bg-[#888]" />
      <div className="absolute left-[46px] top-[4px] w-[3px] h-[8px] border border-[#666] bg-[#eee]" />
      <span className="ml-[5px] font-bold text-[11px] leading-none">+</span>
    </div>
    <div className="pl-[5px]">100%</div>
  </div>
);

export default function App() {
  return (
    <div className="w-[1200px] h-[675px] overflow-hidden flex flex-col bg-[#f5f4f2] font-['Noto_Sans',sans-serif]">
      <MenuBar />
      <StandardBar />
      <FormatBar />
      <div className="flex-1 min-h-0 flex">
        <div className="w-[1160px] shrink-0 flex flex-col">
          <FormulaBar />
          <Sheet />
          <HScroll />
          <TabBar />
        </div>
        <SideBar />
      </div>
      <StatusBar />
    </div>
  );
}
